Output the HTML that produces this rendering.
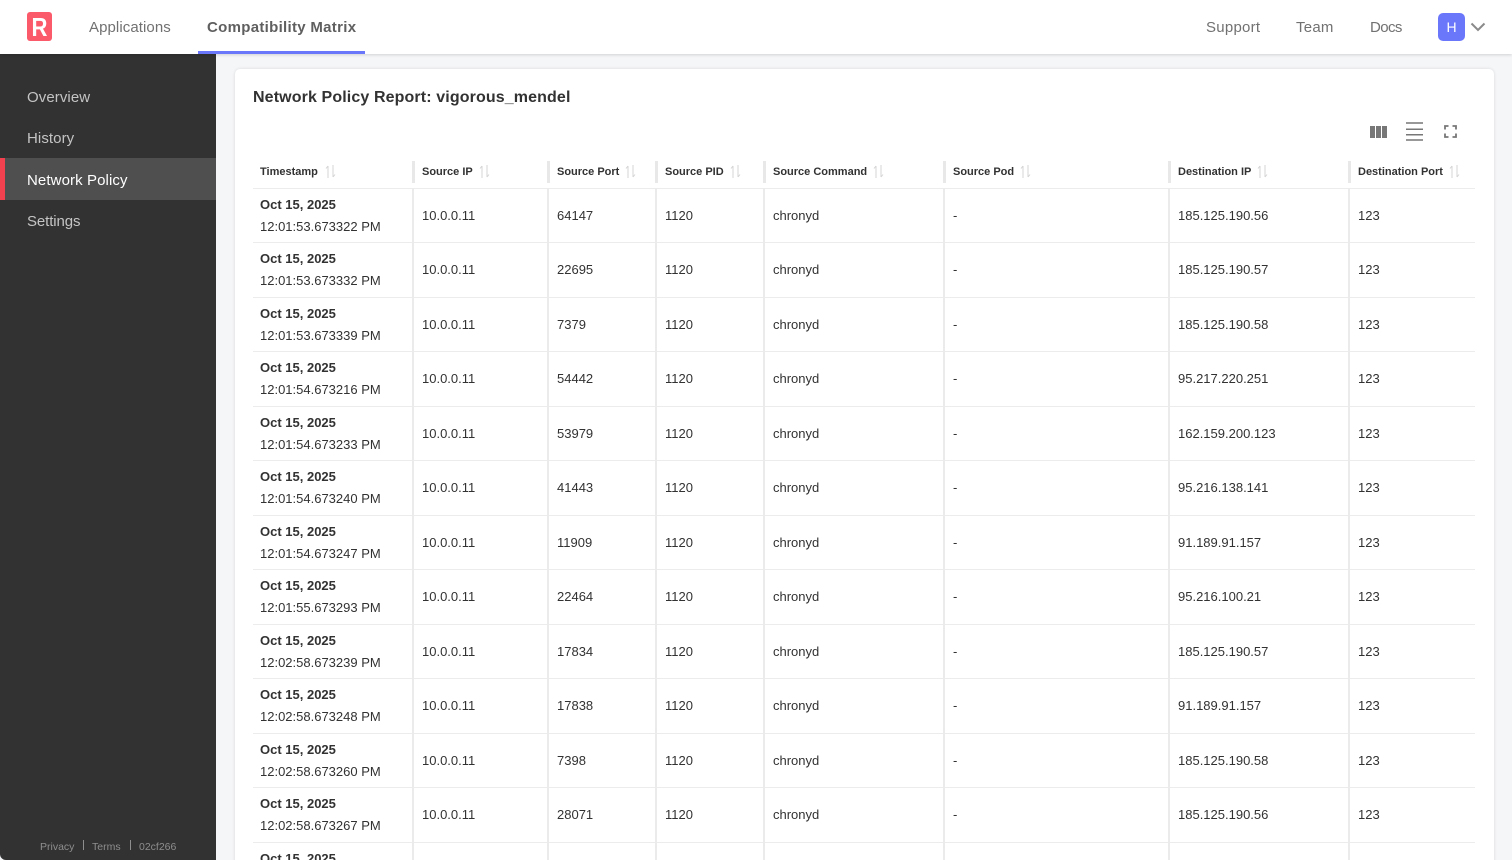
<!DOCTYPE html>
<html><head><meta charset="utf-8"><title>Network Policy</title>
<style>
html,body{margin:0;padding:0;width:1512px;height:860px;overflow:hidden;background:#f5f6f8;font-family:"Liberation Sans",sans-serif;color:#323232}
div,span,svg{position:absolute;box-sizing:border-box}
#root{left:0;top:0;width:1512px;height:860px;overflow:hidden;background:#f5f6f8}
.t{white-space:nowrap}
.nav{top:18px;font-size:15px;line-height:20px;color:#717171;letter-spacing:.25px}
.side{left:27px;font-size:15px;line-height:20px;color:#c4c4c4;letter-spacing:.08px}
#hd{left:0;top:0;width:1512px;height:54px;background:#fff;box-shadow:0 1px 3px rgba(0,0,0,.15);z-index:3}
#sb{left:0;top:54px;width:216px;height:806px;background:#323232;border-bottom-left-radius:6px}
#card{left:235px;top:69px;width:1259px;height:830px;background:#fff;border-radius:5px;box-shadow:0 0 3px rgba(0,0,0,.12)}
table{position:absolute;left:253px;top:156px;border-collapse:collapse;table-layout:fixed;width:1222px;font-size:13px;color:#323232}
th{height:30.500px;padding:0 0 1px 7px;text-align:left;font-size:11px;font-weight:bold;border-bottom:1px solid #ececec;position:relative;white-space:nowrap}
th+th{padding-left:9px}
th+th::before{content:"";position:absolute;left:-1.500px;top:4.500px;width:3px;height:22px;background:#e8e8e8}
th svg{position:static;display:inline-block;vertical-align:-3px;margin-left:6px}
td{height:52.500px;padding:1px 0 0 8px;border-bottom:1px solid #ececec;white-space:nowrap;line-height:22px}
td:first-child{padding-left:7px}
td+td{border-left:2px solid #ebebeb}
td b{display:block;font-weight:bold}
</style></head><body>
<div id="root">
<div id="hd">
<div style="left:27px;top:12px;width:25px;height:29px;background:#fb5a6b;border-radius:3px"><span class="t" style="left:0;top:0;width:25px;color:#fff;font-size:26px;font-weight:bold;line-height:30px;text-align:center;transform:scaleX(.85)">R</span></div>
<div class="nav t" style="left:89px;letter-spacing:.08px">Applications</div>
<div class="nav t" style="left:207px;font-weight:bold;color:#5f5f5f;letter-spacing:.3px">Compatibility Matrix</div>
<div style="left:198px;top:51px;width:167px;height:3px;background:#6a77fb"></div>
<div class="nav t" style="left:1206px">Support</div>
<div class="nav t" style="left:1296px">Team</div>
<div class="nav t" style="left:1370px;letter-spacing:-.6px">Docs</div>
<div class="t" style="left:1438px;top:13px;width:27px;height:28px;background:#6a77fb;border-radius:5px;color:#fff;font-size:14px;line-height:28px;text-align:center">H</div>
<svg style="left:1470px;top:22px" width="16" height="10" viewBox="0 0 16 10"><path d="M1.500 1.500L8 8l6.500-6.500" fill="none" stroke="#8a8a8a" stroke-width="2"/></svg>
</div>
<div id="sb"></div>
<div class="side t" style="top:87.500px">Overview</div>
<div class="side t" style="top:129px">History</div>
<div style="left:0;top:158px;width:216px;height:42px;background:#4f4f4f"></div>
<div style="left:0;top:158px;width:5px;height:42px;background:#f4414f"></div>
<div class="side t" style="top:171px;color:#fff;letter-spacing:.1px">Network Policy</div>
<div class="side t" style="top:212px;letter-spacing:-.1px">Settings</div>
<div class="t" style="left:40px;top:840px;font-size:10.500px;line-height:14px;color:#8e8e8e">Privacy</div>
<div style="left:83px;top:840px;width:1px;height:10px;background:#8e8e8e"></div>
<div class="t" style="left:92px;top:840px;font-size:10.500px;line-height:14px;color:#8e8e8e">Terms</div>
<div style="left:130px;top:840px;width:1px;height:10px;background:#8e8e8e"></div>
<div class="t" style="left:139px;top:840px;font-size:10.500px;line-height:14px;color:#8e8e8e">02cf266</div>
<div id="card"></div>
<div class="t" style="left:253px;top:87px;font-size:16px;line-height:21px;font-weight:bold;color:#323232;letter-spacing:.12px">Network Policy Report: vigorous_mendel</div>
<svg style="left:1370px;top:126px" width="17" height="12" viewBox="0 0 17 12"><path d="M0 0h5v12H0zM6 0h5v12H6zM12 0h5v12h-5z" fill="#777"/></svg>
<svg style="left:1406px;top:122px" width="17" height="19" viewBox="0 0 17 19"><path d="M0 1h17M0 7.300h17M0 12.700h17M0 18h17" stroke="#777" stroke-width="1.500"/></svg>
<svg style="left:1444px;top:125px" width="13" height="13" viewBox="0 0 13 13"><path d="M1 4.500V1h3.500M8.500 1H12v3.500M12 8.500V12H8.500M4.500 12H1V8.500" fill="none" stroke="#777" stroke-width="1.800"/></svg>
<table>
<colgroup><col style="width:160px"><col style="width:135px"><col style="width:108px"><col style="width:108px"><col style="width:180px"><col style="width:225px"><col style="width:180px"><col style="width:126px"></colgroup>
<thead><tr>
<th>Timestamp<svg style="margin-left:7px" width="11" height="13" viewBox="0 0 11 13"><path d="M3 13V1M3 1L1 3.500M8 0v12M8 12l2-2.500" stroke="#d4d4d4" fill="none"/></svg></th>
<th>Source IP<svg width="11" height="13" viewBox="0 0 11 13"><path d="M3 13V1M3 1L1 3.500M8 0v12M8 12l2-2.500" stroke="#d4d4d4" fill="none"/></svg></th>
<th>Source Port<svg width="11" height="13" viewBox="0 0 11 13"><path d="M3 13V1M3 1L1 3.500M8 0v12M8 12l2-2.500" stroke="#d4d4d4" fill="none"/></svg></th>
<th>Source PID<svg width="11" height="13" viewBox="0 0 11 13"><path d="M3 13V1M3 1L1 3.500M8 0v12M8 12l2-2.500" stroke="#d4d4d4" fill="none"/></svg></th>
<th>Source Command<svg width="11" height="13" viewBox="0 0 11 13"><path d="M3 13V1M3 1L1 3.500M8 0v12M8 12l2-2.500" stroke="#d4d4d4" fill="none"/></svg></th>
<th>Source Pod<svg width="11" height="13" viewBox="0 0 11 13"><path d="M3 13V1M3 1L1 3.500M8 0v12M8 12l2-2.500" stroke="#d4d4d4" fill="none"/></svg></th>
<th>Destination IP<svg width="11" height="13" viewBox="0 0 11 13"><path d="M3 13V1M3 1L1 3.500M8 0v12M8 12l2-2.500" stroke="#d4d4d4" fill="none"/></svg></th>
<th>Destination Port<svg width="11" height="13" viewBox="0 0 11 13"><path d="M3 13V1M3 1L1 3.500M8 0v12M8 12l2-2.500" stroke="#d4d4d4" fill="none"/></svg></th>
</tr></thead>
<tbody>
<tr><td><b>Oct 15, 2025</b>12:01:53.673322 PM</td><td>10.0.0.11</td><td>64147</td><td>1120</td><td>chronyd</td><td>-</td><td>185.125.190.56</td><td>123</td></tr>
<tr><td><b>Oct 15, 2025</b>12:01:53.673332 PM</td><td>10.0.0.11</td><td>22695</td><td>1120</td><td>chronyd</td><td>-</td><td>185.125.190.57</td><td>123</td></tr>
<tr><td><b>Oct 15, 2025</b>12:01:53.673339 PM</td><td>10.0.0.11</td><td>7379</td><td>1120</td><td>chronyd</td><td>-</td><td>185.125.190.58</td><td>123</td></tr>
<tr><td><b>Oct 15, 2025</b>12:01:54.673216 PM</td><td>10.0.0.11</td><td>54442</td><td>1120</td><td>chronyd</td><td>-</td><td>95.217.220.251</td><td>123</td></tr>
<tr><td><b>Oct 15, 2025</b>12:01:54.673233 PM</td><td>10.0.0.11</td><td>53979</td><td>1120</td><td>chronyd</td><td>-</td><td>162.159.200.123</td><td>123</td></tr>
<tr><td><b>Oct 15, 2025</b>12:01:54.673240 PM</td><td>10.0.0.11</td><td>41443</td><td>1120</td><td>chronyd</td><td>-</td><td>95.216.138.141</td><td>123</td></tr>
<tr><td><b>Oct 15, 2025</b>12:01:54.673247 PM</td><td>10.0.0.11</td><td>11909</td><td>1120</td><td>chronyd</td><td>-</td><td>91.189.91.157</td><td>123</td></tr>
<tr><td><b>Oct 15, 2025</b>12:01:55.673293 PM</td><td>10.0.0.11</td><td>22464</td><td>1120</td><td>chronyd</td><td>-</td><td>95.216.100.21</td><td>123</td></tr>
<tr><td><b>Oct 15, 2025</b>12:02:58.673239 PM</td><td>10.0.0.11</td><td>17834</td><td>1120</td><td>chronyd</td><td>-</td><td>185.125.190.57</td><td>123</td></tr>
<tr><td><b>Oct 15, 2025</b>12:02:58.673248 PM</td><td>10.0.0.11</td><td>17838</td><td>1120</td><td>chronyd</td><td>-</td><td>91.189.91.157</td><td>123</td></tr>
<tr><td><b>Oct 15, 2025</b>12:02:58.673260 PM</td><td>10.0.0.11</td><td>7398</td><td>1120</td><td>chronyd</td><td>-</td><td>185.125.190.58</td><td>123</td></tr>
<tr><td><b>Oct 15, 2025</b>12:02:58.673267 PM</td><td>10.0.0.11</td><td>28071</td><td>1120</td><td>chronyd</td><td>-</td><td>185.125.190.56</td><td>123</td></tr>
<tr><td><b>Oct 15, 2025</b>&nbsp;</td><td></td><td></td><td></td><td></td><td></td><td></td><td></td></tr>
</tbody>
</table>
</div>
</body></html>
